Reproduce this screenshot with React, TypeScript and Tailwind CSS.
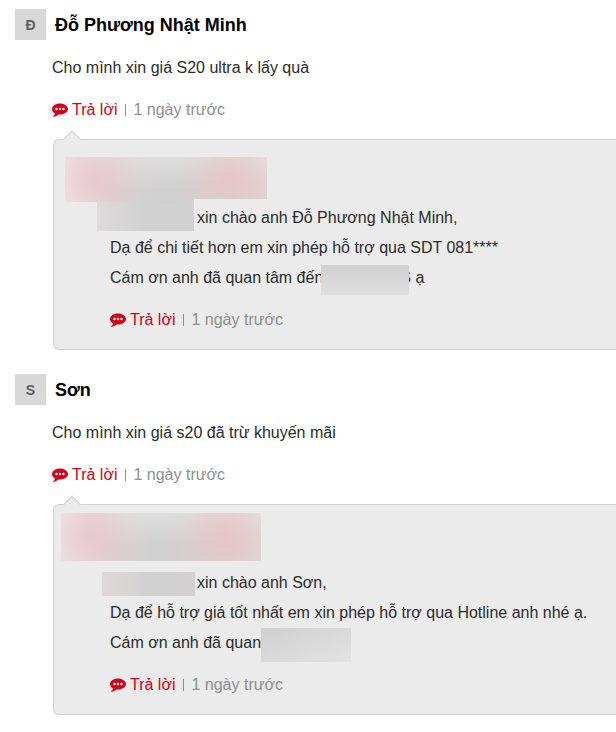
import type { ReactNode } from "react";

function CommentIcon() {
  return (
    <svg viewBox="0 0 16 14" className="h-3.5 w-4 shrink-0" aria-hidden="true">
      <path
        fill="#d0021b"
        d="M8 .5C3.600.5 0 2.900 0 6.100c0 1.900 1.200 3.500 3.100 4.500-.2 1-.9 1.900-1.800 2.500-.4.300-.2.700.3.600 2-.3 3.800-1.100 4.900-2.200.5.100 1 .1 1.500.1 4.400 0 8-2.400 8-5.500S12.400.5 8 .5z"
      />
      <circle cx="4.500" cy="6" r="1.200" fill="#fff" />
      <circle cx="8" cy="6" r="1.200" fill="#fff" />
      <circle cx="11.500" cy="6" r="1.200" fill="#fff" />
    </svg>
  );
}

function Actions() {
  return (
    <div className="mt-3 flex h-[30px] items-center">
      <button type="button" className="flex items-center gap-1 text-[#d0021b]">
        <CommentIcon />
        Trả lời
      </button>
      <span className="mr-[7px] ml-2 h-3 w-px bg-[#8f8f8f]" />
      <span className="text-[#8f8f8f]">1 ngày trước</span>
    </div>
  );
}

function Comment({
  initial,
  name,
  text,
  children,
}: {
  initial: string;
  name: string;
  text: string;
  children: ReactNode;
}) {
  return (
    <article>
      <header className="flex items-center gap-[9px]">
        <span className="flex size-[31px] items-center justify-center bg-[#d8d8d8] text-sm font-bold text-[#5f5f5f]">
          {initial}
        </span>
        <h2 className="text-lg font-bold text-black">{name}</h2>
      </header>
      <div className="mt-[13px] pl-[37px]">
        <p>{text}</p>
        <Actions />
      </div>
      <div className="relative mt-3.5 ml-[38px] rounded-l-md border border-r-0 border-[#d2d2d2] bg-[#ebebeb] pb-3.5">
        <span className="absolute -top-[7px] left-3 size-3 rotate-45 border-t border-l border-[#d2d2d2] bg-[#ebebeb]" />
        {children}
      </div>
    </article>
  );
}

const brand =
  "bg-[radial-gradient(circle_60px_at_14%_45%,#e9c4cacc_0%,#e9c4ca80_35%,#e9c4ca26_70%,#e9c4ca00_100%),radial-gradient(circle_60px_at_82%_50%,#e8c0c2cc_0%,#e8c0c280_35%,#e8c0c226_70%,#e8c0c200_100%),linear-gradient(180deg,#ebebeb80_0%,#ebebeb00_70%),linear-gradient(90deg,#f2e8ea_0%,#dcd4d5_22%,#d1d0d0_45%,#d1d0d0_56%,#e0d8d8_100%)]";

export default function App() {
  return (
    <main className="flex flex-col gap-6 overflow-hidden bg-white pt-[9px] pb-[17px] pl-[15px] font-['Liberation_Sans',Arial,sans-serif] text-base leading-[30px] whitespace-nowrap text-[#2b2b2b]">
      <Comment
        initial="Đ"
        name="Đỗ Phương Nhật Minh"
        text="Cho mình xin giá S20 ultra k lấy quà"
      >
        <div className="pt-[17px] pl-[11px]">
          <div
            className={`h-[45px] w-[202px] [clip-path:polygon(0_0,100%_0,100%_42px,129px_42px,129px_100%,0_100%)] ${brand}`}
          />
        </div>
        <div className="pt-px pl-14">
          <p className="-ml-[13px] flex h-[30px] gap-[3px]">
            <span className="-mt-px h-[29px] w-[97px] bg-linear-to-r from-[#ded9da] via-[#d1d1d1] to-[#d2d1d1]" />
            xin chào anh Đỗ Phương Nhật Minh,
          </p>
          <p>Dạ để chi tiết hơn em xin phép hỗ trợ qua SDT 081****</p>
          <p className="flex h-[30px]">
            Cám ơn anh đã quan tâm đến
            <span className="relative z-10 mt-0.5 -mr-[9px] -ml-0.5 h-[30px] w-[88px] bg-linear-to-b from-[#d0d0d0] to-[#dedede]" />
            S ạ
          </p>
          <Actions />
        </div>
      </Comment>

      <Comment initial="S" name="Sơn" text="Cho mình xin giá s20 đã trừ khuyến mãi">
        <div className="pt-2 pb-1.5 pl-[7px]">
          <div className={`h-12 w-[200px] ${brand}`} />
        </div>
        <div className="pt-px pl-14">
          <p className="-ml-2 flex h-[30px] gap-0.5">
            <span className="mt-1 h-6 w-[93px] bg-linear-to-r from-[#dfd8d8] via-[#d1d1d1] to-[#d3d0d0]" />
            xin chào anh Sơn,
          </p>
          <p>Dạ để hỗ trợ giá tốt nhất em xin phép hỗ trợ qua Hotline anh nhé ạ.</p>
          <p className="flex h-[30px]">
            Cám ơn anh đã quan
            <span className="h-[34px] w-[90px] bg-linear-to-br from-[#d0d0d0] to-[#e2e2e2]" />
          </p>
          <Actions />
        </div>
      </Comment>
    </main>
  );
}
